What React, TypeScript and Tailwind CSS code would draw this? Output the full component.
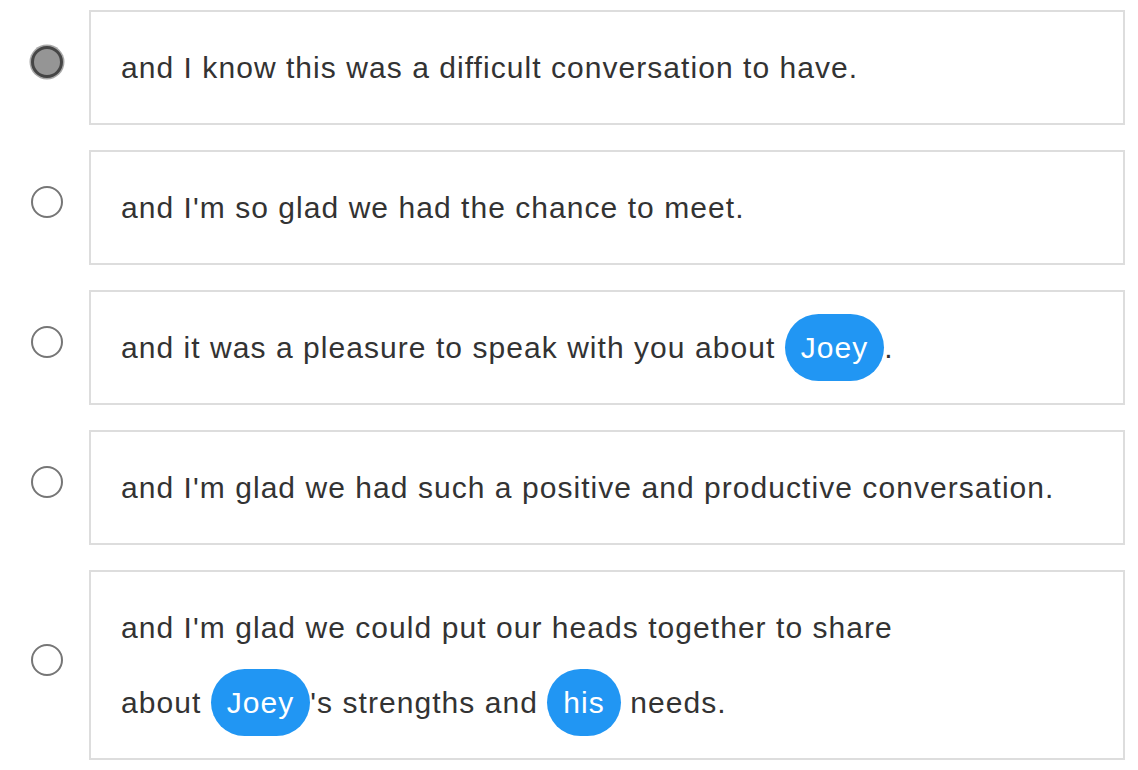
import React from "react";

type Part = string | { pill: string };

interface Option {
  lines: Part[][];
  selected?: boolean;
}

const options: Option[] = [
  { lines: [["and I know this was a difficult conversation to have."]], selected: true },
  { lines: [["and I'm so glad we had the chance to meet."]] },
  { lines: [["and it was a pleasure to speak with you about ", { pill: "Joey" }, "."]] },
  { lines: [["and I'm glad we had such a positive and productive conversation."]] },
  {
    lines: [
      ["and I'm glad we could put our heads together to share"],
      ["about ", { pill: "Joey" }, "'s strengths and ", { pill: "his" }, " needs."],
    ],
  },
];

const Radio = ({ checked }: { checked?: boolean }) =>
  checked ? (
    <span className="block size-8 shrink-0 rounded-full border-[3px] border-[#454545] bg-[#959595] shadow-[0_0_0_1.5px_#a8a8a8]" />
  ) : (
    <span className="block size-8 shrink-0 rounded-full border-2 border-[#767676] bg-white" />
  );

const Pill = ({ text }: { text: string }) => (
  <span className="inline-block h-[67px] rounded-full bg-[#2196f3] px-[16px] align-baseline leading-[67px] text-white">
    {text}
  </span>
);

export default function App() {
  return (
    <div
      className="flex w-[1138px] flex-col gap-[25px] bg-white pl-[31px] pt-[10px] text-[30px] tracking-[1.05px] text-[#333]"
      style={{ fontFamily: '"Liberation Sans", Arial, sans-serif' }}
    >
      {options.map((opt, i) => (
        <div key={i} className="flex items-center gap-[26px]">
          <div className="mb-[11px]">
            <Radio checked={opt.selected} />
          </div>
          <div className="w-[1036px] border-2 border-[#dddddd] bg-white px-[30px] py-[18px]">
            {opt.lines.map((line, j) => (
              <div key={j} className="h-[75px] whitespace-pre leading-[75px]">
                {line.map((p, k) =>
                  typeof p === "string" ? <span key={k}>{p}</span> : <Pill key={k} text={p.pill} />
                )}
              </div>
            ))}
          </div>
        </div>
      ))}
    </div>
  );
}
